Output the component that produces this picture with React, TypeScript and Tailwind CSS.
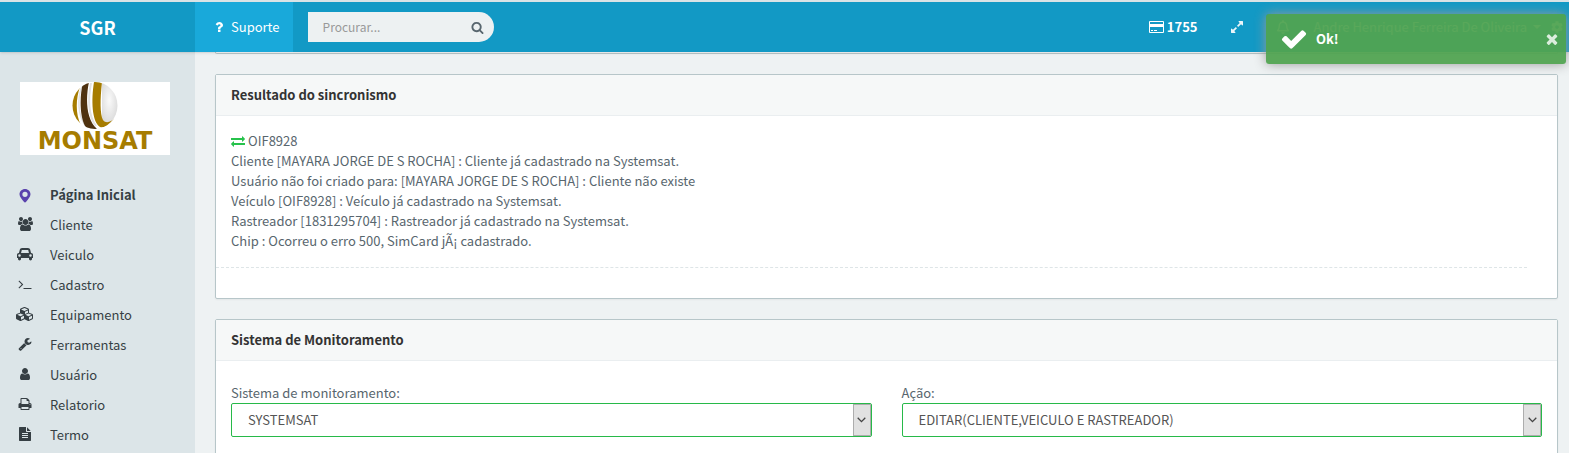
import type { ReactNode } from "react";
import { FaCog, FaRegBell } from "react-icons/fa";

type Glyph = { w: number; d: string };

const glyphs = {
  marker: { w: 1792, d: "M896 128c-390 0-704 300-704 680 0 330 330 640 560 960 70 110 218 110 288 0 230-320 560-630 560-960 0-380-314-680-704-680zm0 340a335 335 0 1 1 0 670 335 335 0 0 1 0-670z" },
  users: { w: 1920, d: "M593 896q-162 5-265 128h-134q-82 0-138-40.5t-56-118.5q0-353 124-353 6 0 43.5 21t97.5 42.5 119 21.5q67 0 133-23-5 37-5 66 0 139 81 256zm1071 637q0 120-73 189.5t-194 69.5h-874q-121 0-194-69.5t-73-189.5q0-53 3.5-103.5t14-109 26.5-108.5 43-97.5 62-81 85.5-53.5 111.5-20q10 0 43 21.5t73 48 107 48 135 21.5 135-21.5 107-48 73-48 43-21.5q61 0 111.5 20t85.5 53.5 62 81 43 97.5 26.5 108.5 14 109 3.5 103.5zm-1024-1277q0 106-75 181t-181 75-181-75-75-181 75-181 181-75 181 75 75 181zm704 384q0 159-112.5 271.5t-271.5 112.5-271.5-112.5-112.5-271.5 112.5-271.5 271.5-112.5 271.5 112.5 112.5 271.5zm576 225q0 78-56 118.5t-138 40.5h-134q-103-123-265-128 81-117 81-256 0-29-5-66 66 23 133 23 59 0 119-21.5t97.5-42.5 43.5-21q124 0 124 353zm-128-609q0 106-75 181t-181 75-181-75-75-181 75-181 181-75 181 75 75 181z" },
  car: { w: 2048, d: "M480 1088q0-66-47-113t-113-47-113 47-47 113 47 113 113 47 113-47 47-113zm36-320h1016l-89-357q-2-8-14-17.5t-21-9.5h-768q-9 0-21 9.5t-14 17.5zm1372 320q0-66-47-113t-113-47-113 47-47 113 47 113 113 47 113-47 47-113zm160-96v384q0 14-9 23t-23 9h-96v128q0 80-56 136t-136 56-136-56-56-136v-128h-1024v128q0 80-56 136t-136 56-136-56-56-136v-128h-96q-14 0-23-9t-9-23v-384q0-93 65.5-158.5t158.5-65.5h28l105-419q23-94 104-157.5t179-63.5h768q98 0 179 63.5t104 157.5l105 419h28q93 0 158.5 65.5t65.5 158.5z" },
  terminal: { w: 1792, d: "M649 983l-466 466q-10 10-23 10t-23-10l-50-50q-10-10-10-23t10-23l393-393-393-393q-10-10-10-23t10-23l50-50q10-10 23-10t23 10l466 466q10 10 10 23t-10 23zm1079 457v64q0 14-9 23t-23 9h-960q-14 0-23-9t-9-23v-64q0-14 9-23t23-9h960q14 0 23 9t9 23z" },
  cubes: { w: 2304, d: "M640 1632l384-192v-314l-384 164v342zm-64-454l404-173-404-173-404 173zm1088 454l384-192v-314l-384 164v342zm-64-454l404-173-404-173-404 173zm-448-293l384-165v-266l-384 164v267zm-64-379l441-189-441-189-441 189zm1088 518v416q0 36-19 67t-52 47l-448 224q-25 14-57 14t-57-14l-448-224q-4-2-7-4-2 2-7 4l-448 224q-25 14-57 14t-57-14l-448-224q-33-16-52-47t-19-67v-416q0-38 21.5-70t56.5-48l434-186v-400q0-38 21.5-70t56.5-48l448-192q23-10 50-10t50 10l448 192q35 16 56.5 48t21.5 70v400l434 186q36 16 57 48t21 70z" },
  wrench: { w: 1792, d: "M448 1472q0-26-19-45t-45-19-45 19-19 45 19 45 45 19 45-19 19-45zm644-420l-682 682q-37 37-90 37-52 0-91-37l-106-108q-38-36-38-90 0-53 38-91l681-681q39 98 114.5 173.5t173.5 114.5zm634-435q0 39-23 106-47 134-164.5 217.5t-258.5 83.5q-185 0-316.5-131.5t-131.5-316.5 131.5-316.5 316.5-131.5q58 0 121.5 16.5t107.5 46.5q16 11 16 28t-16 28l-293 169v224l193 107q5-3 79-48.5t135.5-81 70.5-35.5q15 0 23.5 10t8.5 25z" },
  user: { w: 1792, d: "M1536 1399q0 109-62.5 187t-150.5 78h-854q-88 0-150.5-78t-62.5-187q0-85 8.5-160.5t31.5-152 58.5-131 94-89 134.5-34.5q131 128 313 128t313-128q76 0 134.5 34.5t94 89 58.5 131 31.5 152 8.5 160.5zm-256-887q0 159-112.5 271.5t-271.5 112.5-271.5-112.5-112.5-271.5 112.5-271.5 271.5-112.5 271.5 112.5 112.5 271.5z" },
  print: { w: 1792, d: "M448 1536h896v-256h-896v256zm0-640h896v-384h-160q-40 0-68-28t-28-68v-160h-640v640zm1152 64q0-26-19-45t-45-19-45 19-19 45 19 45 45 19 45-19 19-45zm128 0v416q0 13-9.5 22.5t-22.5 9.5h-224v160q0 40-28 68t-68 28h-960q-40 0-68-28t-28-68v-160h-224q-13 0-22.5-9.5t-9.5-22.5v-416q0-79 56.5-135.5t135.5-56.5h64v-544q0-40 28-68t68-28h672q40 0 88 20t76 48l152 152q28 28 48 76t20 88v256h64q79 0 135.5 56.5t56.5 135.5z" },
  file: { w: 1792, d: "M1596 476q14 14 28 36h-472v-472q22 14 36 28zm-476 164h544v1056q0 40-28 68t-68 28h-1344q-40 0-68-28t-28-68v-1600q0-40 28-68t68-28h800v544q0 40 28 68t68 28zm160 736v-64q0-14-9-23t-23-9h-704q-14 0-23 9t-9 23v64q0 14 9 23t23 9h704q14 0 23-9t9-23zm0-256v-64q0-14-9-23t-23-9h-704q-14 0-23 9t-9 23v64q0 14 9 23t23 9h704q14 0 23-9t9-23zm0-256v-64q0-14-9-23t-23-9h-704q-14 0-23 9t-9 23v64q0 14 9 23t23 9h704q14 0 23-9t9-23z" },
  exchange: { w: 1792, d: "M1792 1184v192q0 13-9.5 22.5t-22.5 9.5h-1376v192q0 13-9.5 22.5t-22.5 9.5q-12 0-24-10l-319-320q-9-9-9-22 0-14 9-23l320-320q9-9 23-9 13 0 22.5 9.5t9.5 22.5v192h1376q13 0 22.5 9.5t9.5 22.5zm0-544q0 14-9 23l-320 320q-9 9-23 9-13 0-22.5-9.5t-9.5-22.5v-192h-1376q-13 0-22.5-9.5t-9.5-22.5v-192q0-13 9.5-22.5t22.5-9.5h1376v-192q0-14 9-23t23-9q12 0 24 10l319 319q9 9 9 23z" },
  search: { w: 1792, d: "M1216 832q0-185-131.5-316.5t-316.5-131.5-316.5 131.5-131.5 316.5 131.5 316.5 316.5 131.5 316.5-131.5 131.5-316.5zm512 832q0 52-38 90t-90 38q-54 0-90-38l-343-342q-179 124-399 124-143 0-273.5-55.5t-225-150-150-225-55.5-273.5 55.5-273.5 150-225 225-150 273.5-55.5 273.5 55.5 225 150 150 225 55.5 273.5q0 220-124 399l343 343q37 37 37 90z" },
  question: { w: 1792, d: "M1088 1256v240q0 16-12 28t-28 12h-240q-16 0-28-12t-12-28v-240q0-16 12-28t28-12h240q16 0 28 12t12 28zm316-600q0 54-15.5 101t-35 76.5-55 59.5-57.5 43.5-61 35.5q-41 23-68.5 65t-27.5 67q0 17-12 32.5t-28 15.5h-240q-15 0-25.5-18.5t-10.5-37.5v-45q0-83 65-156.5t143-108.5q59-27 84-56t25-76q0-42-46.5-74t-107.5-32q-65 0-108 29-35 25-107 115-13 16-31 16-12 0-25-8l-164-125q-13-10-15.5-25t5.5-28q160-266 464-266 80 0 161 31t146 83 106 127.5 41 158.5z" },
  expand: { w: 1792, d: "M883 1056q0 13-10 23l-332 332 144 144q19 19 19 45t-19 45-45 19h-448q-26 0-45-19t-19-45v-448q0-26 19-45t45-19 45 19l144 144 332-332q10-10 23-10t23 10l114 114q10 10 10 23zm781-864v448q0 26-19 45t-45 19-45-19l-144-144-332 332q-10 10-23 10t-23-10l-114-114q-10-10-10-23t10-23l332-332-144-144q-19-19-19-45t19-45 45-19h448q26 0 45 19t19 45z" },
  check: { w: 1792, d: "M1671 566q0 40-28 68l-724 724-136 136q-28 28-68 28t-68-28l-136-136-362-362q-28-28-28-68t28-68l136-136q28-28 68-28t68 28l294 295 656-657q28-28 68-28t68 28l136 136q28 28 28 68z" },
  times: { w: 1792, d: "M1490 1322q0 40-28 68l-136 136q-28 28-68 28t-68-28l-294-294-294 294q-28 28-68 28t-68-28l-136-136q-28-28-28-68t28-68l294-294-294-294q-28-28-28-68t28-68l136-136q28-28 68-28t68 28l294 294 294-294q28-28 68-28t68 28l136 136q28 28 28 68t-28 68l-294 294 294 294q28 28 28 68z" },
} satisfies Record<string, Glyph>;

function Icon({ name, className = "h-3.5" }: { name: keyof typeof glyphs; className?: string }) {
  const g = glyphs[name];
  return (
    <svg viewBox={`0 0 ${g.w} 1792`} className={`w-auto shrink-0 overflow-visible ${className}`} fill="currentColor" aria-hidden="true">
      <path d={g.d} />
    </svg>
  );
}

const menu: { icon: keyof typeof glyphs; label: string }[] = [
  { icon: "marker", label: "Página Inicial" },
  { icon: "users", label: "Cliente" },
  { icon: "car", label: "Veiculo" },
  { icon: "terminal", label: "Cadastro" },
  { icon: "cubes", label: "Equipamento" },
  { icon: "wrench", label: "Ferramentas" },
  { icon: "user", label: "Usuário" },
  { icon: "print", label: "Relatorio" },
  { icon: "file", label: "Termo" },
];

const results = [
  "Cliente [MAYARA JORGE DE S ROCHA] : Cliente já cadastrado na Systemsat.",
  "Usuário não foi criado para: [MAYARA JORGE DE S ROCHA] : Cliente não existe",
  "Veículo [OIF8928] : Veículo já cadastrado na Systemsat.",
  "Rastreador [1831295704] : Rastreador já cadastrado na Systemsat.",
  "Chip : Ocorreu o erro 500, SimCard jÃ¡ cadastrado.",
];

function Logo() {
  return (
    <svg viewBox="0 0 150 73" className="block w-full" role="img" aria-label="Monsat">
      <defs>
        <radialGradient id="globe" cx="0.45" cy="0.45" r="0.6">
          <stop offset="0" stopColor="#fafafa" />
          <stop offset="1" stopColor="#dadada" />
        </radialGradient>
        <clipPath id="disc"><ellipse cx="75" cy="23.5" rx="22.5" ry="23.5" /></clipPath>
      </defs>
      <rect width="150" height="73" fill="#fff" />
      <g clipPath="url(#disc)">
        <rect x="50" y="0" width="50" height="48" fill="#fff" />
        <path d="M82 0C92 2 98 12 98 24C98 32 95 37 92 39C88 42 83 41 82 36Z" fill="url(#globe)" />
        <path d="M60 5C48 12 48 36 61 43C55 32 56 16 60 5Z" fill="#a67c00" />
        <path d="M62 4C57 17 58 33 65 43" fill="none" stroke="#e2e2e2" strokeWidth="1.5" />
        <path d="M63 1L69 0C66 14 65 36 77 47C72 48 67 47 65 44C59 32 60 12 63 1Z" fill="#4f3210" />
        <path d="M71 1C68 16 68 34 76 44" fill="none" stroke="#e2e2e2" strokeWidth="2" />
        <path d="M74 0H82C80 18 80 32 83 38C86 42 91 40 95 36C92 43 85 46 80 45C72 40 71 18 74 0Z" fill="#a67c00" />
      </g>
      <text x="75" y="67" textAnchor="middle" fontSize="24" fill="#a67c00" fontFamily="DejaVu Sans" fontWeight="bold">MONSAT</text>
    </svg>
  );
}

function Panel({ title, children }: { title: string; children: ReactNode }) {
  return (
    <section className="rounded-xs border border-[#b7c6c9] bg-white shadow-xs">
      <h2 className="border-b border-[#eaeef0] bg-[#f6f8f8] px-[15px] py-2.5 font-bold text-[#333]">{title}</h2>
      {children}
    </section>
  );
}

function SelectField({ id, label, value }: { id: string; label: string; value: string }) {
  return (
    <div className="flex flex-1 flex-col">
      <label htmlFor={id}>{label}</label>
      <div className="grid">
        <select id={id} className="col-start-1 row-start-1 h-[34px] w-full appearance-none rounded-xs border border-[#27b949] bg-white px-4 text-[#555] outline-none">
          <option>{value}</option>
        </select>
        <span className="pointer-events-none col-start-1 row-start-1 my-px mr-px flex w-[18px] items-center justify-center justify-self-end border border-[#adadad] bg-[#e1e1e1] text-[#444]">
          <svg viewBox="0 0 9 6" className="w-[9px]" fill="none" stroke="currentColor" strokeWidth="1.3" aria-hidden="true">
            <path d="M.7 .8L4.5 4.6L8.3 .8" />
          </svg>
        </span>
      </div>
    </div>
  );
}

export default function App() {
  return (
    <div className="relative flex h-screen flex-col overflow-hidden bg-[#eef2f3] font-['Noto_Sans_CJK_SC',sans-serif] text-[13px] leading-5 text-[#58666e]">
      <header className="relative z-10 flex h-[52px] shrink-0 border-t-2 border-[#d9e3e6] bg-[#1299c5] text-[#edf6fa] shadow-sm">
        <div className="flex w-[195px] shrink-0 items-center justify-center text-lg font-bold text-white">SGR</div>
        <a href="#suporte" className="flex items-center bg-[#19a9da] pr-[13px] pl-[17px] text-white">
          <Icon name="question" />
          <span className="pl-[5px]">Suporte</span>
        </a>
        <form className="ml-[15px] flex h-[30px] w-[186px] self-center rounded-r-full bg-[#edf1f2]">
          <input aria-label="Procurar" placeholder="Procurar..." className="min-w-0 flex-1 bg-transparent pl-[15px] text-xs outline-none placeholder:text-[#999]" />
          <button type="button" aria-label="Buscar" className="pr-2.5 text-[#58666e]"><Icon name="search" className="h-[13px]" /></button>
        </form>
        <div className="ml-auto flex items-center pr-1.5">
          <a href="#creditos" className="mr-8 flex items-center gap-[3px] font-bold text-white">
            <svg viewBox="0 0 15 12" className="w-[15px]" aria-hidden="true">
              <path d="M.5 .5H14.5V11.5H.5Z" fill="none" stroke="currentColor" />
              <path d="M1 3h13v3H1zM2 9h2v1H2zM5 9h3v1H5z" fill="currentColor" />
            </svg>
            1755
          </a>
          <button type="button" aria-label="Tela cheia" className="mr-8"><Icon name="expand" /></button>
          <FaRegBell className="mr-6 size-3.5" />
          <span>Andre Henrique Ferreira De Oliveira</span>
          <span className="mr-2.5 ml-1.5 border-x-4 border-t-4 border-x-transparent" />
          <FaCog className="size-3" />
        </div>
      </header>
      <div className="flex min-h-0 flex-1">
        <aside className="w-[195px] shrink-0 bg-[#dce5e8] pt-[30px]">
          <div className="ml-5 w-[150px]">
            <Logo />
          </div>
          <nav className="mt-[25px] flex flex-col">
            {menu.map((m, i) => (
              <a key={m.label} href="#menu" className={i === 0 ? "flex h-[30px] items-center font-bold text-[#363f44]" : "flex h-[30px] items-center text-[#363f44]"}>
                <span className={i === 0 ? "flex w-[50px] justify-center text-[#5a43ad]" : "flex w-[50px] justify-center pb-0.5"}><Icon name={m.icon} /></span>
                {m.label}
              </a>
            ))}
          </nav>
        </aside>
        <main className="flex min-w-0 flex-1 flex-col gap-5 overflow-hidden pr-[11px] pl-5">
          <div className="h-0.5 shrink-0 rounded-b-xs border border-t-0 border-[#b7c6c9] bg-white" />
          <Panel title="Resultado do sincronismo">
            <div className="px-[15px] pt-[15px]">
              <p className="flex items-center gap-[3px]"><span className="text-[#27c24c]"><Icon name="exchange" /></span>OIF8928</p>
              {results.map((r) => <p key={r}>{r}</p>)}
            </div>
            <hr className="mt-4 mr-[30px] mb-[30px] border-dashed border-[#dee5e7]" />
          </Panel>
          <Panel title="Sistema de Monitoramento">
            <div className="flex gap-[30px] px-[15px] pt-[22px] pb-10">
              <SelectField id="sistema" label="Sistema de monitoramento:" value="SYSTEMSAT" />
              <SelectField id="acao" label="Ação:" value="EDITAR(CLIENTE,VEICULO E RASTREADOR)" />
            </div>
          </Panel>
        </main>
      </div>
      <div role="alert" className="absolute top-3.5 right-[3px] z-20 flex h-[50px] w-[300px] items-center rounded-[3px] bg-[#51a351]/95 pr-1.5 pl-3.5 font-bold text-white shadow-[0_0_12px_#999]">
        <Icon name="check" className="h-7" />
        <span className="pl-2">Ok!</span>
        <button type="button" aria-label="Fechar" className="ml-auto text-white/80"><Icon name="times" className="h-4" /></button>
      </div>
    </div>
  );
}
